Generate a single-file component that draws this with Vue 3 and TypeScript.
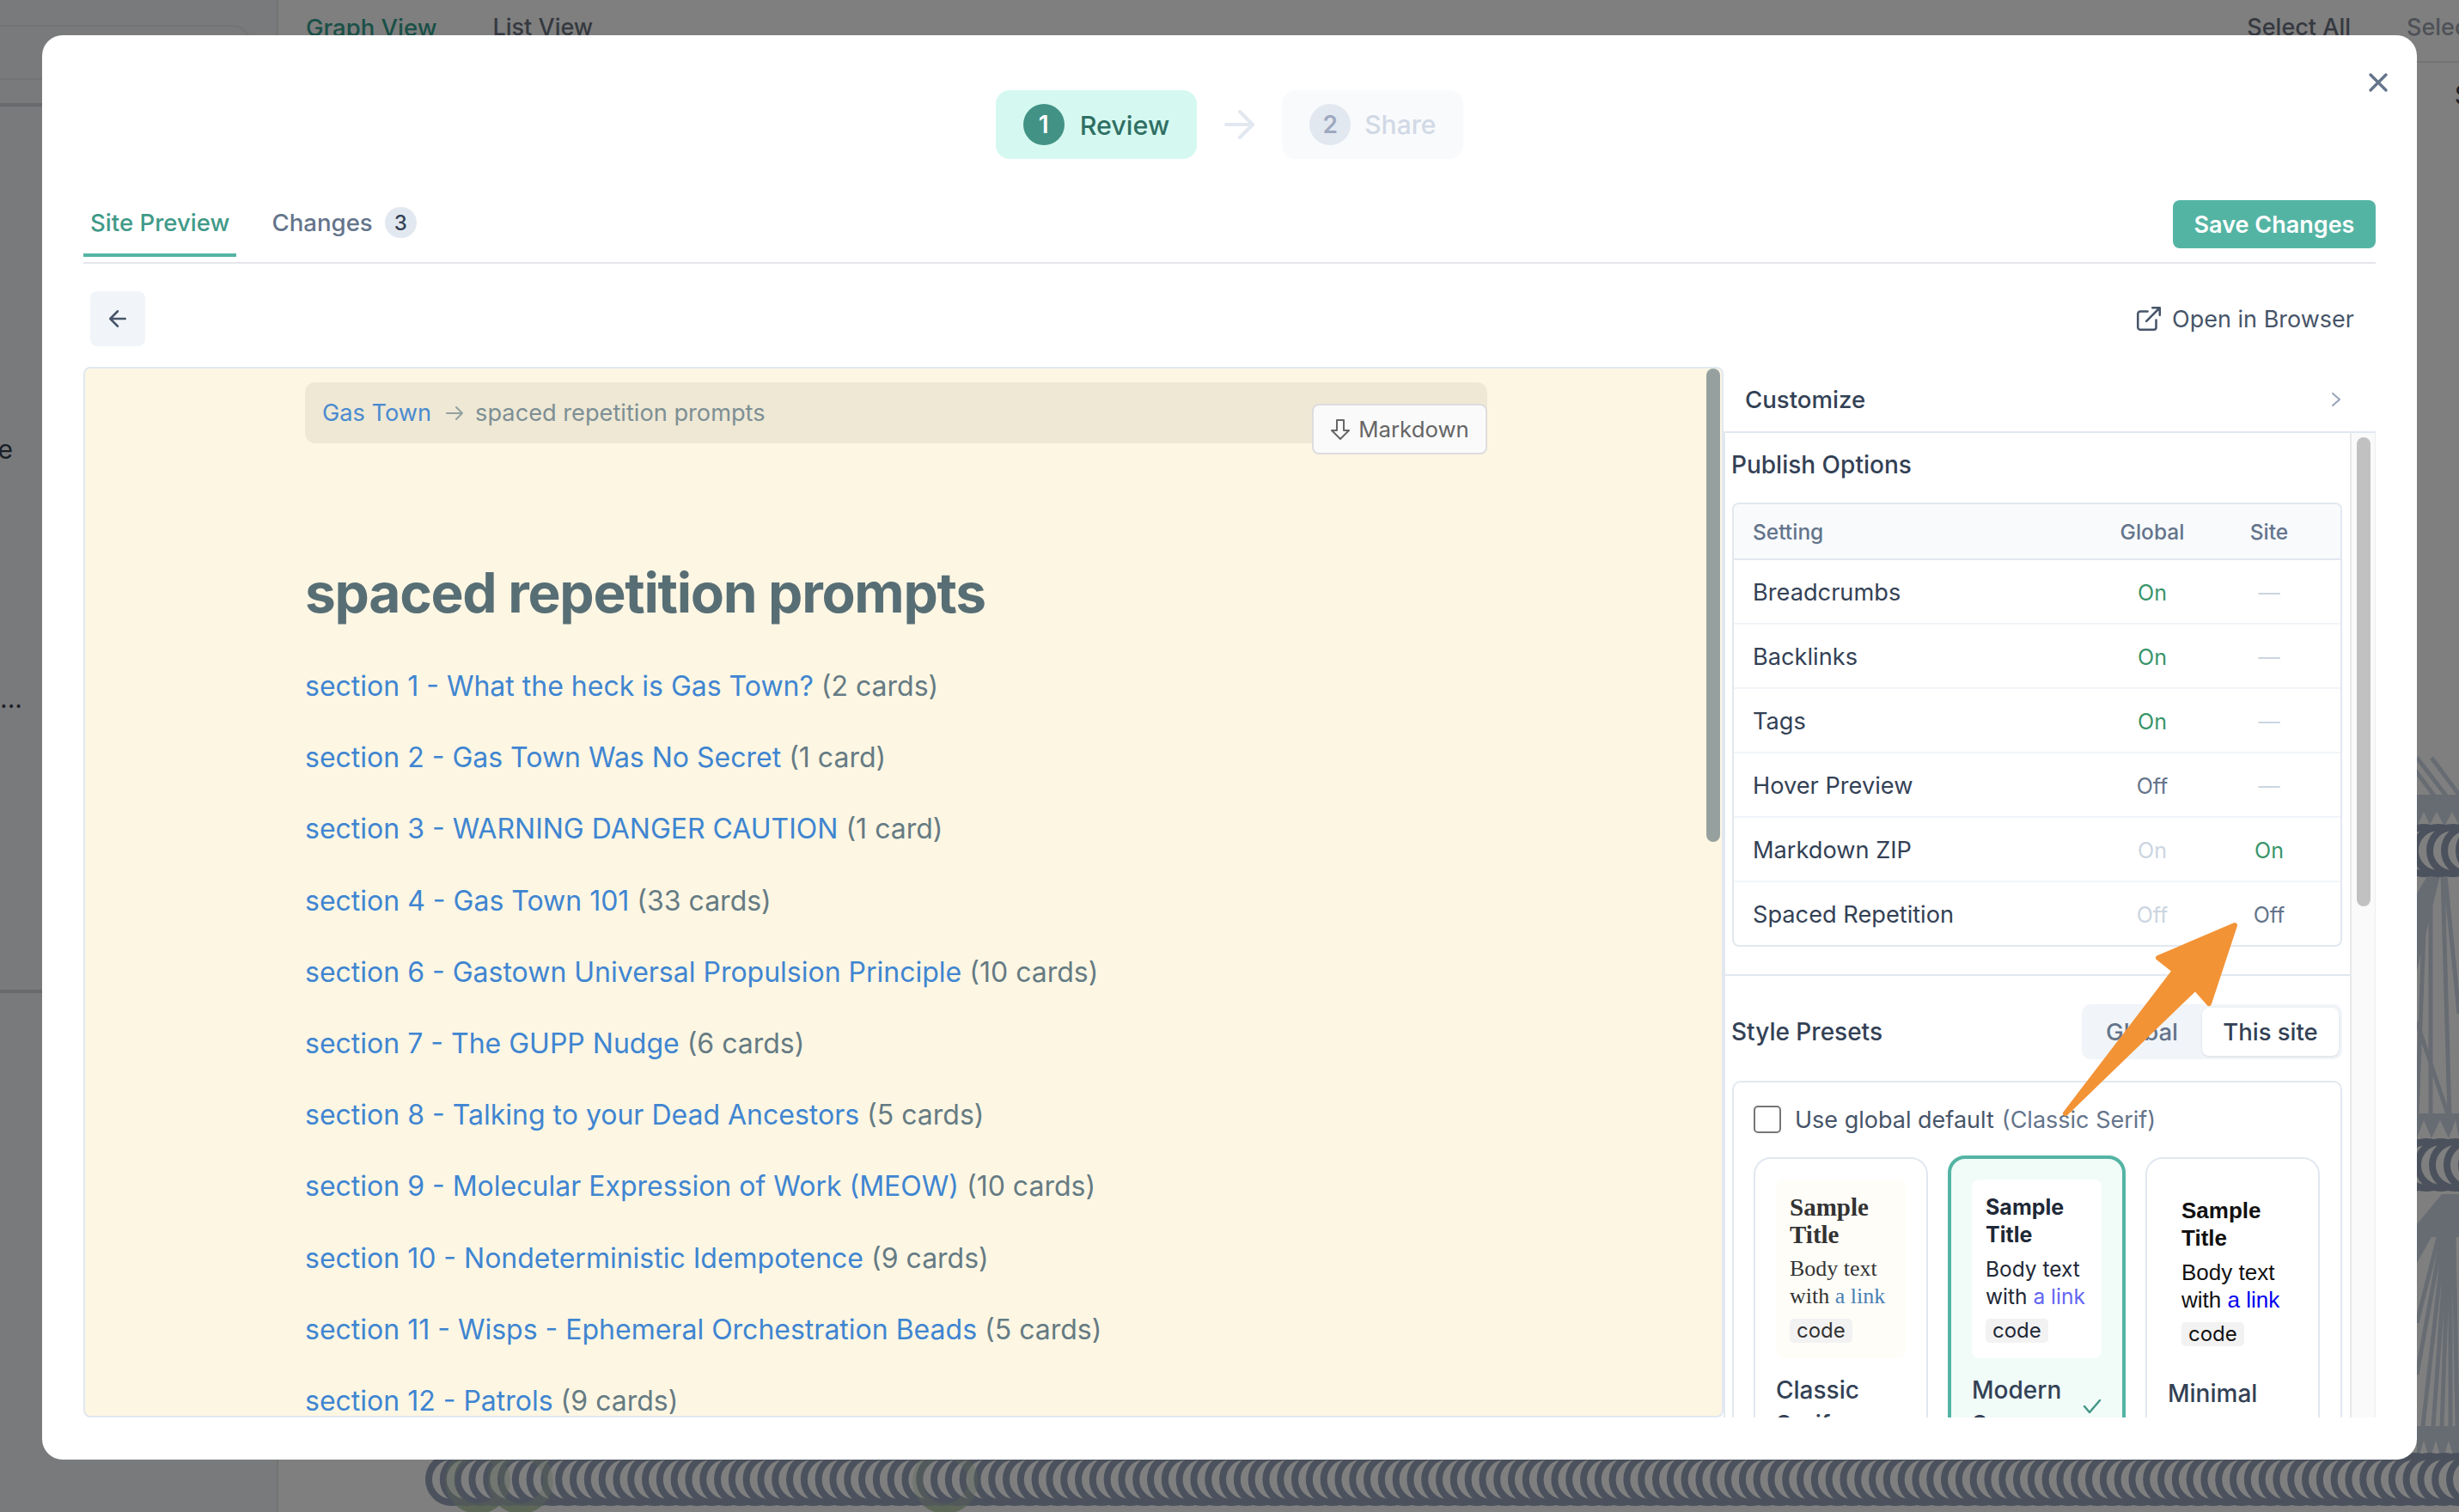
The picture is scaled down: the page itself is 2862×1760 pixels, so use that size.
<script setup lang="ts">
interface Row { name: string; global: string; globalKind: string; site: string; siteKind: string }
const rows: Row[] = [
  { name: 'Breadcrumbs', global: 'On', globalKind: 'on', site: '—', siteKind: 'mute' },
  { name: 'Backlinks', global: 'On', globalKind: 'on', site: '—', siteKind: 'mute' },
  { name: 'Tags', global: 'On', globalKind: 'on', site: '—', siteKind: 'mute' },
  { name: 'Hover Preview', global: 'Off', globalKind: 'off', site: '—', siteKind: 'mute' },
  { name: 'Markdown ZIP', global: 'On', globalKind: 'mute', site: 'On', siteKind: 'on' },
  { name: 'Spaced Repetition', global: 'Off', globalKind: 'mute', site: 'Off', siteKind: 'off' },
]
const sections = [
  ['section 1 - What the heck is Gas Town?', '(2 cards)'],
  ['section 2 - Gas Town Was No Secret', '(1 card)'],
  ['section 3 - WARNING DANGER CAUTION', '(1 card)'],
  ['section 4 - Gas Town 101', '(33 cards)'],
  ['section 6 - Gastown Universal Propulsion Principle', '(10 cards)'],
  ['section 7 - The GUPP Nudge', '(6 cards)'],
  ['section 8 - Talking to your Dead Ancestors', '(5 cards)'],
  ['section 9 - Molecular Expression of Work (MEOW)', '(10 cards)'],
  ['section 10 - Nondeterministic Idempotence', '(9 cards)'],
  ['section 11 - Wisps - Ephemeral Orchestration Beads', '(5 cards)'],
  ['section 12 - Patrols', '(9 cards)'],
]
const presets = [
  { key: 'classic', label: 'Classic Serif' },
  { key: 'modern', label: 'Modern Sans' },
  { key: 'minimal', label: 'Minimal' },
]
const range = (from: number, to: number, step: number) => {
  const out: number[] = []
  for (let x = from; x <= to; x += step) out.push(x)
  return out
}
const coilBottom = range(526, 2890, 16.8)
const coilA = range(2770, 2890, 17)
</script>

<template>
  <div class="page">
    <div class="backdrop">
      <aside class="side">
        <div class="side-box"></div>
        <div class="side-line l2"></div>
        <div class="side-e">e</div>
        <div class="side-dots">...</div>
        <div class="side-line l3"></div>
      </aside>
      <div class="main">
        <div class="topbar">
          <span class="bg-tab active">Graph View</span>
          <span class="bg-tab">List View</span>
          <span class="bg-spacer"></span>
          <span class="bg-tab dark">Select All</span>
          <span class="bg-tab faint">Select None</span>
        </div>
      </div>
      <svg class="graph" width="2862" height="1760" viewBox="0 0 2862 1760" aria-hidden="true">
        <g stroke="#cfd8e6" stroke-width="5" fill="none">
          <path d="M2813 882L2850 930M2830 882L2862 925M2800 882L2836 930" />
          <path d="M2829 1020V1300M2843 1020L2851 1300M2846 1020L2862 1180M2813 1190L2850 1300M2822 1060L2813 1300" />
          <path d="M2842 1440L2813 1600M2845 1440L2820 1660M2848 1440L2832 1660M2850 1440L2842 1660M2852 1440L2852 1660M2856 1440L2860 1660M2838 1440L2813 1540" />
        </g>
        <path d="M2813 1425L2842 1390H2862V1440H2830L2813 1470Z" fill="#cfd8e6" />
        <path d="M2813 1040L2825 1020H2840L2830 1060L2813 1130Z" fill="#cfd8e6" />
        <path d="M2813 925H2862V960H2813Z" fill="#cfd8e6" />
        <path d="M2813 1296H2862V1325H2813Z" fill="#cfd8e6" />
        <path d="M2813 1660H2862V1700H2813Z" fill="#cfd8e6" />
        <g fill="#fff">
          <path d="M2814 960L2821 945L2828 960ZM2828 960L2836 945L2844 960ZM2846 960L2854 945L2862 960Z" />
          <path d="M2813 1325L2821 1304L2830 1325ZM2830 1325L2840 1304L2850 1325ZM2850 1325L2858 1304L2862 1325Z" />
          <path d="M2814 1700L2821 1677L2828 1700ZM2828 1700L2835 1677L2842 1700ZM2843 1700L2850 1677L2857 1700Z" />
        </g>
        <g fill="none" stroke="#b9cfae" stroke-width="12">
          <circle cx="556" cy="1724" r="32" />
          <circle cx="606" cy="1724" r="32" />
          <circle cx="1100" cy="1724" r="32" />
        </g>
        <g fill="#fff" stroke="#96a4ba" stroke-width="8">
          <circle v-for="x in coilA" :key="'a' + x" :cx="x" cy="990" r="27" />
          <circle v-for="x in coilA" :key="'b' + x" :cx="x + 3" cy="1356" r="27" />
          <circle v-for="x in coilBottom" :key="'c' + x" :cx="x" cy="1722" r="27" />
        </g>
        <g fill="none" stroke="#b9cfae" stroke-width="12" opacity="0.35">
          <circle cx="556" cy="1724" r="32" />
          <circle cx="606" cy="1724" r="32" />
          <circle cx="1100" cy="1724" r="32" />
        </g>
      </svg>
      <div class="right-text">S</div>
    </div>
    <div class="overlay"></div>

    <section class="modal">
      <button class="close" aria-label="Close">
        <svg width="24" height="24" viewBox="0 0 24 24" fill="none" stroke="#64748b" stroke-width="3.4" stroke-linecap="round">
          <path d="M3 3l18 18M21 3L3 21" />
        </svg>
      </button>

      <div class="stepper">
        <div class="step current"><span class="num">1</span><span>Review</span></div>
        <svg class="step-arrow" width="36" height="34" viewBox="0 0 36 34" fill="none" stroke="#e2e8f0" stroke-width="4" stroke-linecap="round" stroke-linejoin="round">
          <path d="M2 17H33M18 2L33 17L18 32" />
        </svg>
        <div class="step pending"><span class="num">2</span><span>Share</span></div>
      </div>

      <div class="tabs">
        <div class="tab selected">Site Preview</div>
        <div class="tab">Changes <span class="badge">3</span></div>
        <span class="bg-spacer"></span>
        <button class="save">Save Changes</button>
      </div>

      <div class="toolbar">
        <button class="back" aria-label="Back">
          <svg width="30" height="30" viewBox="0 0 24 24" fill="none" stroke="#475569" stroke-width="2" stroke-linecap="round" stroke-linejoin="round">
            <path d="M19 12H5M12 19l-7-7 7-7" />
          </svg>
        </button>
        <div class="open">
          <svg width="34" height="34" viewBox="0 0 24 24" fill="none" stroke="#475569" stroke-width="1.8" stroke-linecap="round" stroke-linejoin="round">
            <path d="M18 13v6a2 2 0 0 1-2 2H5a2 2 0 0 1-2-2V8a2 2 0 0 1 2-2h6M15 3h6v6M10 14L21 3" />
          </svg>
          <span>Open in Browser</span>
        </div>
      </div>

      <div class="workspace">
        <div class="preview">
          <div class="doc">
            <div class="crumbs">
              <a class="crumb-link">Gas Town</a>
              <svg width="22" height="20" viewBox="0 0 22 20" fill="none" stroke="#93a1a1" stroke-width="2" stroke-linecap="round" stroke-linejoin="round">
                <path d="M2 10H20M13 3l7 7-7 7" />
              </svg>
              <span class="crumb-here">spaced repetition prompts</span>
            </div>
            <h1>spaced repetition prompts</h1>
            <ul class="list">
              <li v-for="s in sections" :key="s[0]"><a>{{ s[0] }}</a> {{ s[1] }}</li>
            </ul>
          </div>
          <button class="md">
            <svg width="24" height="26" viewBox="0 0 24 26" fill="none" stroke="#666" stroke-width="2" stroke-linejoin="round">
              <path d="M8 2H16V14H22L12 24L2 14H8Z" />
            </svg>
            Markdown
          </button>
          <div class="thumb-main"></div>
        </div>

        <div class="panel">
          <div class="customize">
            <span>Customize</span>
            <svg width="12" height="18" viewBox="0 0 12 18" fill="none" stroke="#94a3b8" stroke-width="2" stroke-linecap="round" stroke-linejoin="round">
              <path d="M2 2l8 7-8 7" />
            </svg>
          </div>
          <div class="panel-body">
            <div class="scroller">
              <div class="publish">
                <h3>Publish Options</h3>
                <div class="table">
                  <div class="thead">
                    <span>Setting</span><span class="c">Global</span><span class="c">Site</span>
                  </div>
                  <div v-for="r in rows" :key="r.name" class="tr">
                    <span>{{ r.name }}</span>
                    <span class="c val" :class="r.globalKind">{{ r.global }}</span>
                    <span class="c val" :class="r.siteKind">{{ r.site }}</span>
                  </div>
                </div>
              </div>
              <div class="styles">
                <div class="style-head">
                  <h3>Style Presets</h3>
                  <div class="seg">
                    <span class="seg-item">Global</span>
                    <span class="seg-item on">This site</span>
                  </div>
                </div>
                <div class="preset-box">
                  <div class="check-row">
                    <span class="box"></span>
                    <span>Use global default</span>
                    <span class="hint">(Classic Serif)</span>
                  </div>
                  <div class="cards">
                    <div v-for="p in presets" :key="p.key" class="card" :class="p.key">
                      <div class="sample">
                        <div class="s-title">Sample Title</div>
                        <div class="s-body">Body text with <a>a link</a></div>
                        <code class="s-code">code</code>
                      </div>
                      <div class="label">{{ p.label }}</div>
                      <svg v-if="p.key === 'modern'" class="tick" width="22" height="18" viewBox="0 0 22 18" fill="none" stroke="#3f9586" stroke-width="2.4" stroke-linecap="round" stroke-linejoin="round">
                        <path d="M2 9l6 7L20 2" />
                      </svg>
                    </div>
                  </div>
                </div>
              </div>
            </div>
            <div class="track"><div class="thumb"></div></div>
          </div>
        </div>
      </div>
    </section>

    <svg class="callout" width="2862" height="1760" viewBox="0 0 2862 1760" aria-hidden="true">
      <path d="M2601 1077L2512 1115L2531 1130L2404 1296L2555 1150L2571 1168Z" fill="#f29336" stroke="#f29336" stroke-width="6" stroke-linejoin="round" />
    </svg>
  </div>
</template>

<style>
html, body { margin: 0; padding: 0; background: #808080; }
</style>

<style scoped>
.page { position: relative; width: 2862px; height: 1760px; overflow: hidden; font-family: Inter, "Noto Sans", sans-serif; color: #334155; }
.backdrop { position: absolute; inset: 0; display: flex; background: #fff; }
.side { position: relative; width: 322px; background: #f3f4f6; border-right: 2px solid #e5e7eb; flex: none; }
.side-box { position: absolute; left: -20px; top: 29px; width: 307px; height: 60px; border: 2px solid #e5e7eb; border-radius: 20px; }
.side-line { position: absolute; left: 0; width: 100%; height: 4px; background: #d1d5db; }
.l2 { top: 120px; }
.l3 { top: 1152px; }
.side-e { position: absolute; left: -15px; top: 505px; font-size: 30px; color: #374151; width: 30px; text-align: right; }
.side-dots { position: absolute; left: 0; top: 795px; font-size: 30px; color: #374151; }
.main { flex: 1; min-width: 0; }
.topbar { display: flex; gap: 65px; padding: 14px 0 0 32px; font-size: 27px; line-height: 36px; font-weight: 500; color: #6b7280; border-bottom: 2px solid #e5e7eb; height: 57px; white-space: nowrap; }
.bg-tab.active { color: #34a08e; font-size: 27.5px; }
.bg-tab.dark { color: #6b7280; }
.bg-tab.faint { color: #9ca3af; width: 61px; flex: none; }
.bg-spacer { flex: 1; }
.graph { position: absolute; left: 0; top: 0; }
.right-text { position: absolute; right: -14px; top: 92px; font-size: 30px; color: #374151; }
.overlay { position: absolute; inset: 0; background: rgba(0, 0, 0, 0.5); }
.callout { position: absolute; left: 0; top: 0; pointer-events: none; }

.modal { position: absolute; left: 49px; top: 41px; width: 2764px; height: 1658px; box-sizing: border-box; background: #fff; border-radius: 24px; padding: 64px 48px 49px; display: flex; flex-direction: column; }
.close { position: absolute; right: 33px; top: 43px; padding: 0; border: 0; background: none; display: flex; }

.stepper { display: flex; justify-content: center; align-items: center; height: 80px; flex: none; }
.step { display: flex; align-items: center; gap: 18px; height: 80px; padding: 0 32px; border-radius: 16px; font-size: 30.5px; font-weight: 500; box-sizing: border-box; }
.current { background: #d5f9f0; color: #2f6f64; }
.pending { background: #f8fafc; color: #d2d9e5; font-size: 30px; gap: 16px; }
.num { width: 48px; height: 48px; border-radius: 50%; display: flex; align-items: center; justify-content: center; font-size: 28px; font-weight: 600; }
.current .num { background: #429385; color: #fff; }
.pending .num { background: #e2e8f0; color: #9ea9bf; }
.step-arrow { margin: 0 31px 0 32px; }

.tabs { display: flex; align-items: flex-start; height: 72px; margin-top: 48px; border-bottom: 2px solid #e5e7eb; flex: none; }
.tab { display: flex; align-items: center; gap: 14px; height: 52px; padding: 0 8px 10px; border-bottom: 4px solid transparent; font-size: 27.6px; font-weight: 500; color: #64748b; margin-right: 33px; }
.tab.selected { color: #3f9a88; border-bottom-color: #54b4a4; }
.badge { width: 37px; height: 36px; border-radius: 18px; background: #e2e8f0; color: #334155; font-size: 24px; display: flex; align-items: center; justify-content: center; }
.save { width: 236px; height: 56px; border: 0; border-radius: 8px; background: #54b4a4; color: #fff; font: 600 27px Inter, sans-serif; padding: 0; }

.toolbar { display: flex; justify-content: space-between; align-items: center; margin-top: 32px; height: 64px; flex: none; padding: 0 25px 0 8px; }
.back { width: 64px; height: 64px; background: #f1f5f9; border: 0; border-radius: 8px; padding: 0; display: flex; align-items: center; justify-content: center; }
.open { display: flex; align-items: center; gap: 10px; font-size: 27px; color: #475569; }

.workspace { flex: 1; display: flex; margin-top: 24px; min-height: 0; }
.preview { position: relative; width: 1909px; flex: none; box-sizing: border-box; background: #fdf6e3; border: 2px solid #e2e8f0; border-radius: 8px; overflow: hidden; }
.doc { padding: 16px 0 0 256px; color: #657b83; }
.crumbs { display: flex; align-items: center; gap: 16px; height: 71px; width: 1376px; box-sizing: border-box; padding-left: 20px; background: #eee8d5; border-radius: 12px; font-size: 27.2px; color: #7d8f94; }
.crumb-link { color: #4a8ad0; }
.crumb-here { margin-left: -3px; }
h1 { margin: 134px 0 45px; font-size: 64px; line-height: 80px; font-weight: 700; letter-spacing: -1.28px; color: #586e75; }
.list { list-style: none; margin: 0; padding: 0; display: flex; flex-direction: column; gap: 35.2px; font-size: 32px; line-height: 48px; }
.list a { color: #3f85d1; }
.md { position: absolute; left: 1428px; top: 41px; width: 204px; height: 59px; box-sizing: border-box; display: flex; align-items: center; justify-content: center; gap: 9px; padding: 0; background: #fafafa; border: 2px solid #ddd; border-radius: 8px; font: 400 25.8px Inter, sans-serif; color: #666; }
.thumb-main { position: absolute; right: 2px; top: 0; width: 16px; height: 551px; border-radius: 8px; background: #96a19f; }

.panel { flex: 1; display: flex; flex-direction: column; min-width: 0; }
.customize { display: flex; justify-content: space-between; align-items: center; height: 77px; box-sizing: border-box; padding: 0 40px 0 25px; border-bottom: 2px solid #e2e8f0; font-size: 27.6px; font-weight: 500; flex: none; }
.panel-body { flex: 1; display: flex; min-height: 0; border-left: 2px solid #e2e8f0; }
.scroller { flex: 1; min-width: 0; overflow: hidden; }
.track { width: 30px; flex: none; background: #fafafa; border-left: 2px solid #e8e8e8; border-right: 1px solid #eee; padding: 5px 0 0 6px; box-sizing: border-box; }
.thumb { width: 16px; height: 546px; border-radius: 8px; background: #c1c1c1; }
h3 { margin: 0; font-size: 28px; font-weight: 500; color: #334155; }
.publish { padding: 17px 9px 32px 8px; border-bottom: 2px solid #e2e8f0; }
.publish h3, .style-head h3 { margin-left: -1px; }
.table { margin-top: 24px; border: 2px solid #e2e8f0; border-radius: 8px; overflow: hidden; }
.publish h3 { line-height: 40px; }
.thead, .tr { display: grid; grid-template-columns: 1fr 136px 136px; padding: 0 15px 0 22px; align-items: center; }
.thead { height: 65px; box-sizing: border-box; background: #f8fafc; border-bottom: 2px solid #e2e8f0; font-size: 24.5px; font-weight: 500; color: #64748b; }
.tr { height: 75px; box-sizing: border-box; padding-top: 2px; border-bottom: 2px solid #f1f5f9; font-size: 27.2px; color: #334155; }
.tr:last-child { border-bottom: 0; height: 73px; }
.c { text-align: center; }
.val { font-size: 25px; }
.val.on { color: #38956a; }
.val.off { color: #64748b; }
.val.mute { color: #cbd5e1; }
.styles { padding: 33px 9px 0 8px; }
.style-head { display: flex; justify-content: space-between; align-items: center; height: 64px; }
.seg { display: flex; align-items: center; height: 64px; box-sizing: border-box; background: #f1f5f9; border-radius: 10px; padding: 0 4px; font-size: 27.5px; color: #64748b; font-weight: 500; }
.seg-item { padding: 0 28px 0 24px; height: 56px; display: flex; align-items: center; box-sizing: border-box; }
.seg-item.on { width: 159px; justify-content: center; padding: 0; background: #fff; color: #334155; border-radius: 8px; box-shadow: 0 1px 3px rgba(0, 0, 0, 0.1); }
.preset-box { margin-top: 25px; border: 2px solid #e2e8f0; border-radius: 10px; padding: 27px 23px 24px; }
.check-row { display: flex; align-items: center; gap: 9px; height: 32px; font-size: 27px; color: #475569; }
.box { width: 32px; height: 32px; box-sizing: border-box; border: 2px solid #767676; border-radius: 5px; margin-right: 7px; }
.hint { color: #64748b; }
.cards { display: flex; gap: 23px; margin-top: 26px; align-items: flex-start; }
.card { position: relative; width: 203px; box-sizing: border-box; border: 2px solid #e2e8f0; border-radius: 20px; padding: 24px; margin-top: 2px; background: #fff; flex: none; }
.card.modern { width: 207px; border: 4px solid #54b4a4; background: #f1fbf8; margin-top: 0; }
.sample { padding: 16px; border-radius: 8px; height: 208px; box-sizing: border-box; width: 151px; }
.s-title { font-weight: 700; line-height: 32px; font-size: 25px; }
.s-body { margin-top: 8px; line-height: 32px; font-size: 24.5px; }
.s-code { display: inline-block; margin-top: 10px; height: 28px; line-height: 28px; padding: 0 8px; border-radius: 5px; background: #f2f2f3; font: 24px/28px Inter, sans-serif; }
.label { margin-top: 17px; font-size: 28px; font-weight: 500; line-height: 40px; color: #334155; }
.tick { position: absolute; right: 24px; top: 279px; }
.classic .sample { background: #fefdf8; font-family: "Liberation Serif", serif; color: #333; }
.classic .s-title { font-size: 29px; }
.classic .s-body { font-size: 26px; }
.classic a { color: #4a7fb5; }
.modern .sample { background: #fff; color: #1f2937; }
.modern a { color: #6366f1; }
.minimal .sample { padding-top: 20px; font-family: "Liberation Sans", sans-serif; color: #111; }
.minimal a { color: #0000ee; }
.minimal .s-title { font-size: 26px; }
.minimal .s-body { font-size: 26px; }
.minimal .label { margin-top: 21px; }
</style>
